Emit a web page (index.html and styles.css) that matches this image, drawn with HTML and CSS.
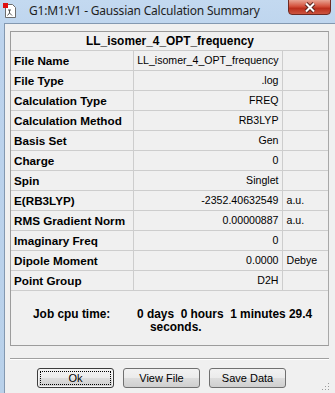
FILE: index.html
```html
<!DOCTYPE html>
<html lang="en">
<head>
    <meta charset="UTF-8">
    <meta name="viewport" content="width=device-width, initial-scale=1.0">
    <title>Gaussian Calculation Summary</title>
    <link rel="stylesheet" href="styles.css">
</head>
<body>
    <div class="window">
        <div class="titlebar">
            <svg class="app-icon" width="14" height="16" viewBox="0 0 14 16">
                <path d="M2.5 1.5h7l3 3v10h-10z" fill="#fff" stroke="#6d6d6d"/>
                <path d="M5 7l3 0M6.5 7v3M6.5 10l-2 2.5M6.5 10l2.5 2.5" stroke="#555" fill="none"/>
                <rect x="0" y="0" width="5" height="5" fill="#e01010"/>
            </svg>
            <span class="title">G1:M1:V1 - Gaussian Calculation Summary</span>
            <button class="close">
                <svg width="14" height="11" viewBox="0 0 14 11">
                    <path d="M3 1.5l8 8M11 1.5l-8 8" stroke="#5a2620" stroke-width="4" fill="none"/>
                    <path d="M3 1.5l8 8M11 1.5l-8 8" stroke="#fff" stroke-width="2" fill="none"/>
                </svg>
            </button>
        </div>

        <div class="client">
            <div class="summary">
                <table class="grid">
                    <colgroup>
                        <col class="col-label">
                        <col class="col-value">
                        <col class="col-unit">
                    </colgroup>
                    <tr><th colspan="3" class="head">LL_isomer_4_OPT_frequency</th></tr>
                    <tr><th>File Name</th><td class="val">LL_isomer_4_OPT_frequency</td><td></td></tr>
                    <tr><th>File Type</th><td class="val">.log</td><td></td></tr>
                    <tr><th>Calculation Type</th><td class="val">FREQ</td><td></td></tr>
                    <tr><th>Calculation Method</th><td class="val">RB3LYP</td><td></td></tr>
                    <tr><th>Basis Set</th><td class="val">Gen</td><td></td></tr>
                    <tr><th>Charge</th><td class="val">0</td><td></td></tr>
                    <tr><th>Spin</th><td class="val">Singlet</td><td></td></tr>
                    <tr><th>E(RB3LYP)</th><td class="val">-2352.40632549</td><td>a.u.</td></tr>
                    <tr><th>RMS Gradient Norm</th><td class="val">0.00000887</td><td>a.u.</td></tr>
                    <tr><th>Imaginary Freq</th><td class="val">0</td><td></td></tr>
                    <tr><th>Dipole Moment</th><td class="val">0.0000</td><td>Debye</td></tr>
                    <tr><th>Point Group</th><td class="val">D2H</td><td></td></tr>
                </table>
                <div class="cputime">
                    <span class="cpu-label">Job cpu time:</span>
                    <span class="cpu-value">0 days&nbsp; 0 hours&nbsp; 1 minutes 29.4<br><span class="indent">seconds.</span></span>
                </div>
            </div>

            <div class="separator"></div>

            <div class="buttons">
                <button class="button default">Ok</button>
                <button class="button">View File</button>
                <button class="button">Save Data</button>
            </div>
            <div class="grip"></div>
        </div>
    </div>
</body>
</html>
```

FILE: styles.css
```css
body {
    margin: 0;
    width: 335px;
    height: 393px;
    overflow: hidden;
    font-family: "Liberation Sans", Arial, sans-serif;
    font-size: 11px;
    color: #000;
}
.window {
    height: 393px;
    background: linear-gradient(#c3d9f0, #bcd3ed 40px, #b9d1ea);
    display: flex;
    flex-direction: column;
}
.titlebar {
    height: 23px;
    display: flex;
    align-items: flex-start;
    position: relative;
}
.app-icon {
    margin: 3px 0 0 3px;
}
.title {
    margin: 4px 0 0 12px;
    font-family: "Noto Sans", "DejaVu Sans", sans-serif;
    font-size: 12px;
    line-height: 14px;
    color: #1e1e1e;
    letter-spacing: -0.2px;
}
.close {
    position: absolute;
    top: -1px;
    left: 288px;
    width: 43px;
    height: 16px;
    border: 1px solid #6e2a22;
    border-radius: 0 0 4px 4px;
    background: linear-gradient(#e8a493, #d4523d 45%, #bb2f1c 60%, #cc5540);
    display: flex;
    align-items: center;
    justify-content: center;
    padding: 0;
}
.client {
    flex: 1;
    margin-left: 4px;
    border-left: 1px solid #8398b0;
    border-top: 1px solid #8398b0;
    background: #f0f0f0;
    position: relative;
}
.summary {
    margin: 7px 6px 0 5px;
    border: 1px solid #9c9c9c;
    border-right-color: #a8a8a8;
    height: 315px;
    box-sizing: border-box;
}
.grid {
    border-collapse: collapse;
    width: 100%;
    table-layout: fixed;
}
.col-label {
    width: 122px;
}
.col-value {
    width: 149px;
}
.grid th,
.grid td {
    height: 20px;
    padding: 0 3px;
    border-bottom: 1px solid #cdcdcd;
    border-right: 1px solid #cdcdcd;
    white-space: nowrap;
    overflow: hidden;
    box-sizing: border-box;
}
.grid tr > :last-child {
    border-right: 0;
    padding-left: 4px;
}
.grid th {
    text-align: left;
    font-weight: bold;
    font-size: 11.7px;
}
.grid th.head {
    height: 18px;
    text-align: center;
    font-size: 11.9px;
    padding-top: 1px;
}
.grid td {
    font-size: 10.6px;
}
.grid td.val {
    text-align: right;
}
.cputime {
    display: flex;
    padding: 17px 0 0 22px;
    font-weight: bold;
    font-size: 11.9px;
    line-height: 13px;
}
.cpu-label {
    width: 104px;
}
.indent {
    padding-left: 13px;
}
.separator {
    margin: 12px 6px 0 5px;
    border-top: 1px solid #a0a0a0;
    border-bottom: 1px solid #fff;
}
.buttons {
    display: flex;
    gap: 9px;
    padding: 8px 0 0 32px;
}
.button {
    width: 77px;
    height: 20px;
    font-family: "Liberation Sans", Arial, sans-serif;
    font-size: 11px;
    color: #000;
    border: 1px solid #707070;
    border-radius: 3px;
    background: linear-gradient(#f2f2f2, #ebebeb 50%, #dddddd 50%, #cfcfcf);
    padding: 0;
    outline: none;
}
.button.default {
    border-color: #3c3c3c;
    box-shadow: inset 0 0 0 1px #f4f4f4;
    position: relative;
}
.button.default::after {
    content: '';
    position: absolute;
    inset: 2px;
    border: 1px dotted #000;
}
.grip {
    position: absolute;
    right: 6px;
    bottom: 3px;
    width: 8px;
    height: 8px;
    background:
        radial-gradient(circle, #9a9a9a 0.8px, transparent 1px) 0 0 / 3px 3px;
    clip-path: polygon(100% 0, 100% 100%, 0 100%);
}
```
